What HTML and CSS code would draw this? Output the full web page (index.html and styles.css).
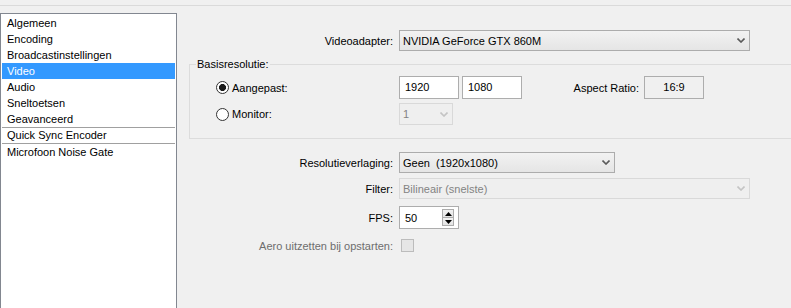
FILE: index.html
```html
<!DOCTYPE html>
<html lang="nl">
<head>
  <meta charset="UTF-8">
  <meta name="viewport" content="width=device-width, initial-scale=1.0">
  <title>Instellingen - Video</title>
  <link rel="stylesheet" href="styles.css">
</head>
<body>
  <div class="topbar"></div>
  <div class="window">
    <ul class="sidebar">
      <li>Algemeen</li>
      <li>Encoding</li>
      <li>Broadcastinstellingen</li>
      <li class="active">Video</li>
      <li>Audio</li>
      <li>Sneltoetsen</li>
      <li>Geavanceerd</li>
      <li class="sep">Quick Sync Encoder</li>
      <li class="sep last">Microfoon Noise Gate</li>
    </ul>

    <div class="main">
      <div class="row row-adapter">
        <span class="lbl">Videoadapter:</span>
        <div class="combo wide">
          <span>NVIDIA GeForce GTX 860M</span>
          <svg class="chev" width="8" height="5" viewBox="0 0 8 5"><polyline points="0.5,0.5 4,4 7.5,0.5" fill="none" stroke="#5a5a5a" stroke-width="1.6"/></svg>
        </div>
      </div>

      <fieldset class="group">
        <legend>Basisresolutie:</legend>
        <div class="row row-custom">
          <label class="opt"><span class="radio checked"></span>Aangepast:</label>
          <div class="edit">1920</div>
          <div class="edit second">1080</div>
          <span class="aspect-lbl">Aspect Ratio:</span>
          <div class="aspect">16:9</div>
        </div>
        <div class="row row-monitor">
          <label class="opt"><span class="radio"></span>Monitor:</label>
          <div class="combo small disabled">
            <span>1</span>
            <svg class="chev" width="8" height="5" viewBox="0 0 8 5"><polyline points="0.5,0.5 4,4 7.5,0.5" fill="none" stroke="#c4c4c4" stroke-width="1.6"/></svg>
          </div>
        </div>
      </fieldset>

      <div class="row row-downscale">
        <span class="lbl">Resolutieverlaging:</span>
        <div class="combo medium">
          <span>Geen&nbsp; (1920x1080)</span>
          <svg class="chev" width="8" height="5" viewBox="0 0 8 5"><polyline points="0.5,0.5 4,4 7.5,0.5" fill="none" stroke="#5a5a5a" stroke-width="1.6"/></svg>
        </div>
      </div>

      <div class="row row-filter">
        <span class="lbl">Filter:</span>
        <div class="combo wide disabled">
          <span>Bilineair (snelste)</span>
          <svg class="chev" width="8" height="5" viewBox="0 0 8 5"><polyline points="0.5,0.5 4,4 7.5,0.5" fill="none" stroke="#c4c4c4" stroke-width="1.6"/></svg>
        </div>
      </div>

      <div class="row row-fps">
        <span class="lbl">FPS:</span>
        <div class="spin">
          <span>50</span>
          <div class="spin-btns">
            <div class="spin-btn"><svg width="7" height="4" viewBox="0 0 7 4"><polygon points="3.5,0 7,4 0,4" fill="#000"/></svg></div>
            <div class="spin-btn"><svg width="7" height="4" viewBox="0 0 7 4"><polygon points="0,0 7,0 3.5,4" fill="#000"/></svg></div>
          </div>
        </div>
      </div>

      <div class="row row-aero">
        <span class="lbl muted">Aero uitzetten bij opstarten:</span>
        <span class="check"></span>
      </div>
    </div>
  </div>
</body>
</html>
```

FILE: styles.css
```css
body {
  margin: 0;
  background-color: #f0f0f0;
  font-family: "Liberation Sans", Arial, sans-serif;
  font-size: 11px;
  color: #000;
  overflow: hidden;
  height: 308px;
}

.topbar {
  height: 5px;
  border-bottom: 1px solid #dadada;
}

.window {
  display: flex;
  height: 302px;
  overflow: hidden;
}

/* left list */
.sidebar {
  flex-shrink: 0;
  list-style: none;
  margin: 7px 0 0 0;
  padding: 1px;
  width: 173px;
  height: 293px;
  background-color: #fff;
  border: 1px solid #828790;
  border-bottom: none;
}

.sidebar li {
  height: 16px;
  line-height: 16px;
  padding-left: 5px;
  white-space: nowrap;
}

.sidebar li.active {
  background-color: #3399ff;
  color: #fff;
}

.sidebar li.sep {
  border-top: 1px solid #a0a0a0;
  height: 15px;
  line-height: 15px;
}

.sidebar li.sep.last {
  height: 16px;
  line-height: 16px;
}

/* right panel */
.main {
  flex: 1;
  min-width: 0;
  padding: 24px 0 0 12px;
}

.row {
  display: flex;
  align-items: center;
}

.lbl {
  flex-shrink: 0;
  width: 204px;
  margin-right: 6px;
  text-align: right;
  white-space: nowrap;
}

.lbl.muted {
  color: #6d6d6d;
}

.combo {
  flex-shrink: 0;
  box-sizing: border-box;
  height: 21px;
  display: flex;
  align-items: center;
  justify-content: space-between;
  padding: 0 4px 0 3px;
  border: 1px solid #acacac;
  background: linear-gradient(#f2f2f2, #e5e5e5);
  white-space: nowrap;
}

.combo.wide {
  width: 351px;
}

.combo.medium {
  width: 216px;
}

.combo.small {
  width: 54px;
  height: 22px;
}

.combo.disabled {
  border-color: #d9d9d9;
  background: #efefef;
  color: #838383;
}

.chev {
  display: block;
}

/* group box */
.group {
  margin: 7px 0 0 0;
  padding: 0 0 13px 6px;
  width: 640px;
  min-width: 640px;
  border: 1px solid #dcdcdc;
}

.group legend {
  padding: 0 1px;
  line-height: 13px;
}

.row-custom {
  height: 23px;
  margin-top: 5px;
}

.row-monitor {
  margin-top: 4px;
}

.opt {
  flex-shrink: 0;
  width: 183px;
  padding-left: 20px;
  display: flex;
  align-items: center;
  gap: 3px;
}

.radio {
  box-sizing: border-box;
  width: 13px;
  height: 13px;
  border: 1px solid #333;
  border-radius: 50%;
  background: #fff;
}

.radio.checked {
  background: radial-gradient(circle, #1a1a1a 3.2px, #fff 3.8px);
}

.edit {
  flex-shrink: 0;
  box-sizing: border-box;
  width: 60px;
  height: 23px;
  line-height: 21px;
  padding-left: 5px;
  border: 1px solid #adadad;
  background: #fff;
}

.edit.second {
  margin-left: 3px;
}

.aspect-lbl {
  flex-shrink: 0;
  width: 117px;
  padding-right: 5px;
  text-align: right;
}

.aspect {
  flex-shrink: 0;
  box-sizing: border-box;
  width: 60px;
  height: 23px;
  line-height: 21px;
  text-align: center;
  border: 1px solid #adadad;
}

/* lower rows */
.row-downscale {
  margin-top: 13px;
}

.row-filter {
  margin-top: 5px;
}

.row-fps {
  margin-top: 7px;
}

.spin {
  box-sizing: border-box;
  width: 60px;
  height: 23px;
  display: flex;
  align-items: center;
  justify-content: space-between;
  padding: 0 4px 0 5px;
  border: 1px solid #adadad;
  background: #fff;
}

.spin-btns {
  display: flex;
  flex-direction: column;
}

.spin-btn {
  box-sizing: border-box;
  width: 12px;
  height: 9px;
  display: flex;
  align-items: center;
  justify-content: center;
  border: 1px solid #acacac;
  background: linear-gradient(#f2f2f2, #e3e3e3);
}

.spin-btn + .spin-btn {
  margin-top: -1px;
}

.row-aero {
  margin-top: 10px;
}

.check {
  box-sizing: border-box;
  width: 13px;
  height: 13px;
  margin-left: 2px;
  border: 1px solid #bcbcbc;
  background: #e6e6e6;
}
```
